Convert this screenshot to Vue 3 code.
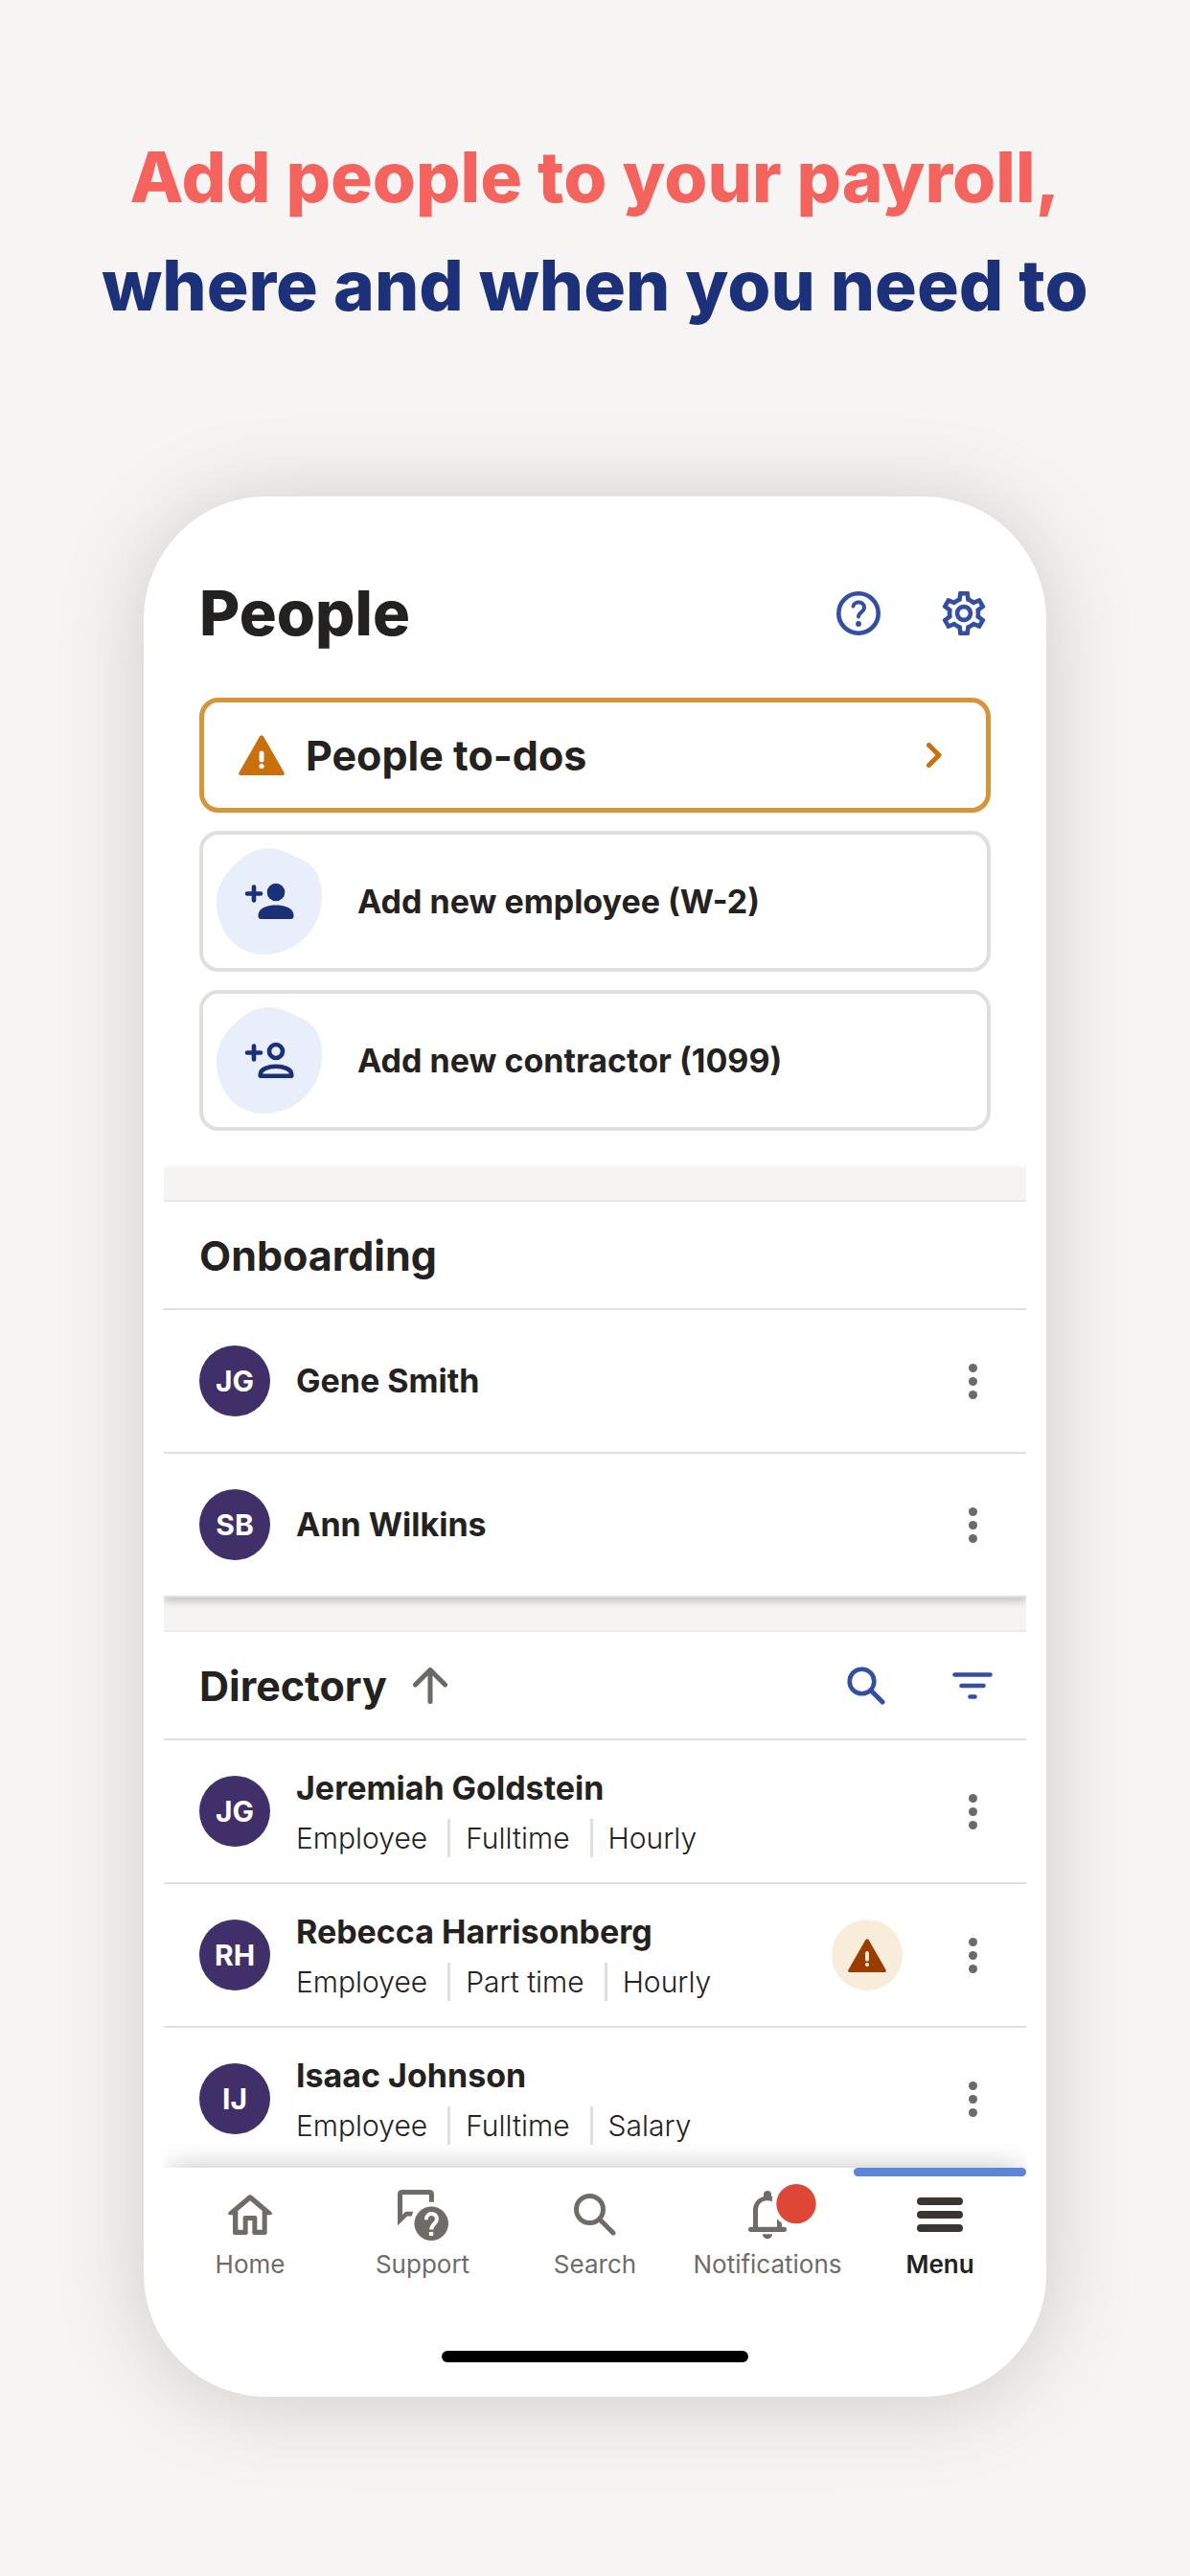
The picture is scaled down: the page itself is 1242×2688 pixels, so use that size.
<template>
  <main class="promo">
    <h1 class="headline">
      <span class="headline-accent">Add people to your payroll,</span>
      <span>where and when you need to</span>
    </h1>

    <div class="phone">
      <div class="screen">
        <header class="page-header">
          <h2 class="page-title">People</h2>
          <button class="icon-btn" type="button" aria-label="Help">
            <svg width="46" height="46" viewBox="0 0 46 46" fill="none" stroke="currentColor" stroke-linecap="round">
              <circle cx="23" cy="23" r="20.7" stroke-width="4.6" />
              <path d="M17.5 15.5C18.5 10 29 10 29 17C29 21.5 23 22 23 26.5" stroke-width="4" />
              <circle cx="23" cy="34" r="2.9" fill="currentColor" stroke="none" />
            </svg>
          </button>
          <button class="icon-btn" type="button" aria-label="Settings">
            <svg width="46" height="46" viewBox="2 2 20 20" fill="currentColor">
              <path :d="gearPath" />
            </svg>
          </button>
        </header>

        <div class="cards">
          <button class="todo-card" type="button">
            <svg width="48" height="42" viewBox="0 0 48 42">
              <path :d="trianglePath" fill="#c96f0b" />
              <path d="M24 19V26" stroke="#fff" stroke-width="5" stroke-linecap="round" />
              <circle cx="24" cy="32.5" r="2.6" fill="#fff" />
            </svg>
            <span class="todo-label">People to-dos</span>
            <svg class="chevron" width="16" height="26" viewBox="0 0 16 26" fill="none">
              <path d="M2.5 2.5L13 13L2.5 23.5" />
            </svg>
          </button>

          <button v-for="action in actions" :key="action.label" class="action-card" type="button">
            <svg width="110" height="111" viewBox="0 0 110 111">
              <path
                d="M55 0C68 0 74 6 90 12C105 20 111 34 110 54C108 86 82 111 50 111C18 111 0 84 0 56C0 42 6 30 18 18C28 8 40 0 55 0Z"
                fill="#e8effb"
              />
              <path d="M32 47.5H46M39 40.5V54.5" stroke="#1c307a" stroke-width="4.6" stroke-linecap="round" />
              <g v-if="action.filled" fill="#1c307a">
                <circle cx="62" cy="46" r="9.3" />
                <path d="M43.5 70C43.5 62 54 59.5 62 59.5S80.5 62 80.5 70V71Q80.5 74 77.5 74H46.5Q43.5 74 43.5 71Z" />
              </g>
              <g v-else fill="none" stroke="#1c307a" stroke-width="4.6">
                <circle cx="62" cy="46" r="7" />
                <path d="M45.8 71.7V70C45.8 64.5 54 61.8 62 61.8S78.2 64.5 78.2 70V71.7Z" stroke-linejoin="round" />
              </g>
            </svg>
            <span>{{ action.label }}</span>
          </button>
        </div>

        <section class="group onboarding">
          <div class="group-header">
            <h3 class="group-title">Onboarding</h3>
          </div>
          <ul class="people">
            <li v-for="person in onboarding" :key="person.name" class="person">
              <span class="avatar">{{ person.initials }}</span>
              <span class="person-name">{{ person.name }}</span>
              <button class="more-btn" type="button" :aria-label="`More for ${person.name}`">
                <span class="dot"></span>
                <span class="dot"></span>
                <span class="dot"></span>
              </button>
            </li>
          </ul>
        </section>

        <section class="group">
          <div class="group-header">
            <h3 class="group-title">Directory</h3>
            <button class="sort-btn" type="button" aria-label="Sort ascending">
              <svg width="36" height="38" viewBox="0 0 36 38" fill="none">
                <path d="M18 3V35.5M2.5 18L18 2.5L33.5 18" />
              </svg>
            </button>
            <button class="icon-btn search-btn" type="button" aria-label="Search directory">
              <svg width="40" height="40" viewBox="0 0 40 40" fill="none" stroke="currentColor" stroke-linecap="round">
                <circle cx="15.5" cy="15.5" r="12.8" stroke-width="4.6" />
                <path d="M25.5 25.5L37 37" stroke-width="5" />
              </svg>
            </button>
            <button class="icon-btn filter-btn" type="button" aria-label="Filter directory">
              <svg width="42" height="28" viewBox="0 0 42 28" stroke="currentColor" stroke-width="4.6" stroke-linecap="round">
                <path d="M2.5 2.5H39.5M9.5 14H32.5M18.5 25.5H23.5" />
              </svg>
            </button>
          </div>
          <ul class="people">
            <li v-for="person in directory" :key="person.name" class="person">
              <span class="avatar">{{ person.initials }}</span>
              <div class="person-info">
                <span class="person-name">{{ person.name }}</span>
                <div class="tags">
                  <span v-for="tag in person.tags" :key="tag" class="tag">{{ tag }}</span>
                </div>
              </div>
              <span v-if="person.warning" class="warning" role="img" aria-label="Needs attention">
                <svg width="40" height="35" viewBox="0 0 48 42">
                  <path :d="trianglePath" fill="#983c00" />
                  <path d="M24 18V26" stroke="#f8edda" stroke-width="4.6" stroke-linecap="round" />
                  <circle cx="24" cy="32.5" r="2.5" fill="#f8edda" />
                </svg>
              </span>
              <button class="more-btn" type="button" :aria-label="`More for ${person.name}`">
                <span class="dot"></span>
                <span class="dot"></span>
                <span class="dot"></span>
              </button>
            </li>
          </ul>
        </section>

        <nav class="tabs">
          <a
            v-for="tab in tabs"
            :key="tab.id"
            href="#"
            class="tab"
            :class="{ active: tab.id === activeTab }"
            @click.prevent="activeTab = tab.id"
          >
            <span class="tab-icon">
              <svg v-if="tab.id === 'home'" width="46" height="42" viewBox="0 0 138 126" fill="currentColor">
                <path
                  fill-rule="evenodd"
                  d="M63 3Q69 -2 75 3L136 55Q141 63 133 64H122V120Q122 126 116 126H82Q76 126 76 120V81H62V120Q62 126 56 126H21Q15 126 15 120V64H5Q-3 63 2 55ZM69 19L31 51V110H47V72Q47 66 53 66H85Q91 66 91 72V110H107V51Z"
                />
              </svg>
              <svg v-else-if="tab.id === 'support'" width="53" height="53" viewBox="0 0 158 158">
                <path
                  d="M0 111V14Q0 0 14 0H99Q113 0 113 14V38H98V15H15V78L20 72Q23 68 28 68H49Q45 75 44 82H30Z"
                  fill="currentColor"
                />
                <circle cx="105" cy="105" r="53" fill="currentColor" />
                <path d="M89 93C89 69 122 69 122 91C122 106 105 106 105 124" fill="none" stroke="#fff" stroke-width="12" />
                <rect x="98" y="131" width="13" height="12" fill="#fff" />
              </svg>
              <svg
                v-else-if="tab.id === 'search'"
                width="44"
                height="44"
                viewBox="0 0 44 44"
                fill="none"
                stroke="currentColor"
                stroke-linecap="round"
              >
                <circle cx="16.5" cy="16.5" r="14" stroke-width="5" />
                <path d="M27 27L41 41" stroke-width="5" />
              </svg>
              <svg
                v-else-if="tab.id === 'notifications'"
                class="bell"
                width="40"
                height="50"
                viewBox="0 0 120 150"
                fill="currentColor"
              >
                <path d="M48 18V12A12 12 0 0 1 72 12V17L76 19L74 34Q67 31 60 31C40 31 30 45 30 62V116H15V62C15 40 28 24 48 18Z" />
                <path d="M90 88L105 102V116H90Z" />
                <rect x="0" y="113" width="120" height="16" rx="8" />
                <path d="M45 136H75A15 15 0 0 1 45 136Z" />
                <circle cx="150" cy="41" r="62" fill="#de4636" />
              </svg>
              <svg v-else width="48" height="36" viewBox="0 0 48 36" fill="#38362f">
                <rect width="48" height="8" rx="4" />
                <rect y="14" width="48" height="8" rx="4" />
                <rect y="28" width="48" height="8" rx="4" />
              </svg>
            </span>
            <span>{{ tab.label }}</span>
          </a>
        </nav>
      </div>
      <div class="home-indicator"></div>
    </div>
  </main>
</template>

<script setup>
import { ref } from 'vue'

const activeTab = ref('menu')

const actions = [
  { label: 'Add new employee (W-2)', filled: true },
  { label: 'Add new contractor (1099)', filled: false },
]

const onboarding = [
  { initials: 'JG', name: 'Gene Smith' },
  { initials: 'SB', name: 'Ann Wilkins' },
]

const directory = [
  { initials: 'JG', name: 'Jeremiah Goldstein', tags: ['Employee', 'Fulltime', 'Hourly'] },
  { initials: 'RH', name: 'Rebecca Harrisonberg', tags: ['Employee', 'Part time', 'Hourly'], warning: true },
  { initials: 'IJ', name: 'Isaac Johnson', tags: ['Employee', 'Fulltime', 'Salary'] },
]

const tabs = [
  { id: 'home', label: 'Home' },
  { id: 'support', label: 'Support' },
  { id: 'search', label: 'Search' },
  { id: 'notifications', label: 'Notifications' },
  { id: 'menu', label: 'Menu' },
]

const trianglePath = 'M22 1.5Q24 -1.2 26 1.5L47.5 39Q48.6 42 46 42H2Q-0.6 42 0.5 39Z'

const gearPath =
  'M19.43 12.98c.04-.32.07-.64.07-.98s-.03-.66-.07-.98l2.11-1.65c.19-.15.24-.42.12-.64l-2-3.46c-.09-.16-.26-.25-.44-.25-.06 0-.12.01-.17.03l-2.49 1c-.52-.4-1.08-.73-1.69-.98l-.38-2.65C14.46 2.18 14.25 2 14 2h-4c-.25 0-.46.18-.49.42l-.38 2.65c-.61.25-1.17.59-1.69.98l-2.49-1c-.06-.02-.12-.03-.18-.03-.17 0-.34.09-.43.25l-2 3.46c-.13.22-.07.49.12.64l2.11 1.65c-.04.32-.07.65-.07.98s.03.66.07.98l-2.11 1.65c-.19.15-.24.42-.12.64l2 3.46c.09.16.26.25.44.25.06 0 .12-.01.17-.03l2.49-1c.52.4 1.08.73 1.69.98l.38 2.65c.03.24.24.42.49.42h4c.25 0 .46-.18.49-.42l.38-2.65c.61-.25 1.17-.59 1.69-.98l2.49 1c.06.02.12.03.18.03.17 0 .34-.09.43-.25l2-3.46c.12-.22.07-.49-.12-.64l-2.11-1.65zm-1.98-1.71c.04.31.05.52.05.73 0 .21-.02.43-.05.73l-.14 1.13.89.7 1.08.84-.7 1.21-1.27-.51-1.04-.42-.9.68c-.43.32-.84.56-1.25.73l-1.06.43-.16 1.13-.2 1.35h-1.4l-.19-1.35-.16-1.13-1.06-.43c-.43-.18-.83-.41-1.23-.71l-.91-.7-1.06.43-1.27.51-.7-1.21 1.08-.84.89-.7-.14-1.13c-.03-.31-.05-.54-.05-.74s.02-.43.05-.73l.14-1.13-.89-.7-1.08-.84.7-1.21 1.27.51 1.04.42.9-.68c.43-.32.84-.56 1.25-.73l1.06-.43.16-1.13.2-1.35h1.39l.19 1.35.16 1.13 1.06.43c.43.18.83.41 1.23.71l.91.7 1.06-.43 1.27-.51.7 1.21-1.07.85-.89.7.14 1.13zM12 8c-2.21 0-4 1.79-4 4s1.79 4 4 4 4-1.79 4-4-1.79-4-4-4zm0 6c-1.1 0-2-.9-2-2s.9-2 2-2 2 .9 2 2-.9 2-2 2z'
</script>

<style>
body {
  margin: 0;
  background: #f7f5f3;
}
</style>

<style scoped>
.promo {
  box-sizing: border-box;
  min-height: 100vh;
  padding: 128px 24px 184px;
  background: #f7f5f3;
  color: #232221;
  font-family: Inter, 'Open Sans', sans-serif;
}

button {
  padding: 0;
  border: 0;
  background: none;
  color: inherit;
  font: inherit;
  text-align: left;
  cursor: pointer;
}

svg {
  display: block;
  flex: none;
}

.headline {
  display: flex;
  flex-direction: column;
  margin: 0 0 164px;
  color: #1d317b;
  font-size: 73px;
  font-weight: 800;
  line-height: 113px;
  text-align: center;
}

.headline-accent {
  color: #f4635e;
}

.phone {
  box-sizing: border-box;
  max-width: 942px;
  margin: 0 auto;
  padding: 60px 21px 36px;
  border-radius: 128px;
  background: #fff;
  box-shadow: 0 6px 90px rgba(60, 60, 50, 0.22);
}

.screen {
  overflow: hidden;
}

.page-header {
  display: flex;
  align-items: center;
  gap: 64px;
  padding: 22px 42px 48px 37px;
}

.page-title {
  flex: 1;
  margin: 0;
  font-size: 65px;
  font-weight: 800;
  line-height: 80px;
}

.icon-btn {
  color: #334fa3;
}

.cards {
  display: flex;
  flex-direction: column;
  gap: 19px;
  padding: 0 37px 38px;
}

.todo-card {
  display: flex;
  align-items: center;
  box-sizing: border-box;
  height: 120px;
  padding: 0 46px 0 36px;
  border: 5px solid #d6953a;
  border-radius: 20px;
}

.todo-label {
  flex: 1;
  margin-left: 22px;
  font-size: 43px;
  font-weight: 700;
}

.chevron {
  stroke: #c96f0b;
  stroke-width: 5px;
  stroke-linecap: round;
  stroke-linejoin: round;
}

.action-card {
  display: flex;
  align-items: center;
  gap: 37px;
  padding: 14px;
  border: 4px solid #e0dfdc;
  border-radius: 20px;
  font-size: 34px;
  font-weight: 700;
}

.group {
  border-top: 34px solid #f5f4f2;
}

.onboarding {
  position: relative;
  box-shadow: 0 4px 8px rgba(0, 0, 0, 0.2);
}

.group-header {
  display: flex;
  align-items: center;
  box-sizing: border-box;
  height: 115px;
  padding: 0 35px 0 37px;
  border-top: 2px solid #ebeae8;
  border-bottom: 2px solid #dfdfdd;
}

.group-title {
  margin: 0;
  font-size: 43px;
  font-weight: 700;
}

.sort-btn {
  margin-left: 27px;
}

.sort-btn path {
  stroke: #6b6966;
  stroke-width: 5px;
  stroke-linecap: round;
  stroke-linejoin: round;
}

.search-btn {
  margin-left: auto;
}

.filter-btn {
  margin-left: 70px;
}

.people {
  margin: 0;
  padding: 0;
  list-style: none;
}

.person {
  display: flex;
  align-items: center;
  height: 148px;
  padding: 0 37px;
  border-bottom: 2px solid #dfdfdd;
}

.avatar {
  flex: none;
  width: 74px;
  margin-right: 27px;
  border-radius: 50%;
  background: #402f68;
  color: #fff;
  font-size: 30px;
  font-weight: 700;
  line-height: 74px;
  text-align: center;
}

.person-name {
  font-size: 34px;
  font-weight: 700;
  line-height: 48px;
}

.person-info {
  display: flex;
  flex-direction: column;
  gap: 8px;
}

.tags {
  display: flex;
}

.tag {
  font-size: 30px;
  font-weight: 300;
  line-height: 40px;
}

.tag + .tag {
  margin-left: 21px;
  padding-left: 16px;
  border-left: 3px solid #e0dfdc;
}

.more-btn {
  display: flex;
  flex-direction: column;
  align-items: center;
  gap: 5px;
  width: 37px;
  margin-left: auto;
}

.dot {
  width: 9px;
  height: 9px;
  border-radius: 50%;
  background: #6c6a68;
}

.warning {
  display: grid;
  place-items: center;
  width: 74px;
  height: 74px;
  margin-left: auto;
  border-radius: 50%;
  background: #f8edda;
}

.warning + .more-btn {
  margin-left: 55px;
}

.tabs {
  position: relative;
  display: grid;
  grid-template-columns: repeat(5, 1fr);
  margin-top: -4px;
  background: #fff;
  box-shadow: 0 -6px 28px -8px rgba(0, 0, 0, 0.28);
}

.tab {
  position: relative;
  display: flex;
  flex-direction: column;
  align-items: center;
  gap: 8px;
  padding: 21px 0 10px;
  color: #6f6c68;
  font-size: 26px;
  line-height: 32px;
  text-decoration: none;
}

.tab.active {
  color: #232221;
  font-weight: 600;
}

.tab.active::before {
  content: '';
  position: absolute;
  top: 0;
  left: 0;
  right: 0;
  height: 9px;
  border-radius: 5px;
  background: #5b85da;
}

.tab-icon {
  display: grid;
  place-items: center;
  height: 56px;
}

.bell {
  overflow: visible;
}

.home-indicator {
  width: 320px;
  height: 12px;
  margin: 64px auto 0;
  border-radius: 6px;
  background: #000;
}
</style>
